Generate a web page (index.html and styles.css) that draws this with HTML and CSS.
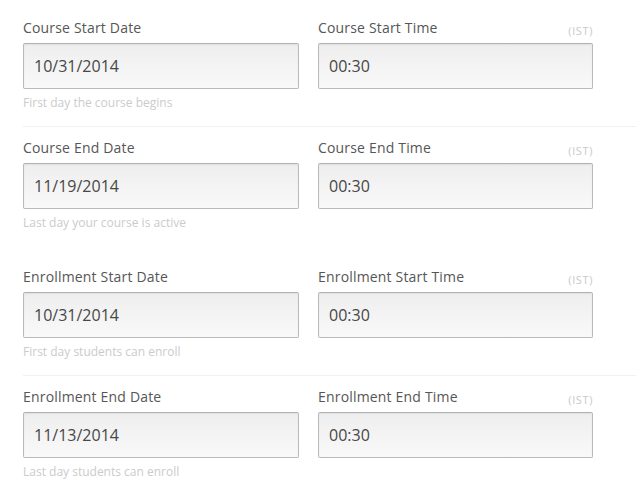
FILE: index.html
```html
<!DOCTYPE html>
<html lang="en">
<head>
<meta charset="utf-8">
<title>Course Schedule</title>
<link rel="stylesheet" href="styles.css">
</head>
<body>
<form class="schedule">
  <section class="group sep">
    <div class="field">
      <div class="label-row"><label class="label">Course Start Date</label></div>
      <input class="input" type="text" value="10/31/2014">
      <p class="hint">First day the course begins</p>
    </div>
    <div class="field">
      <div class="label-row"><label class="label">Course Start Time</label><span class="tz">(IST)</span></div>
      <input class="input" type="text" value="00:30">
    </div>
  </section>
  <section class="group plain">
    <div class="field">
      <div class="label-row"><label class="label">Course End Date</label></div>
      <input class="input" type="text" value="11/19/2014">
      <p class="hint">Last day your course is active</p>
    </div>
    <div class="field">
      <div class="label-row"><label class="label">Course End Time</label><span class="tz">(IST)</span></div>
      <input class="input" type="text" value="00:30">
    </div>
  </section>
  <section class="group sep">
    <div class="field">
      <div class="label-row"><label class="label">Enrollment Start Date</label></div>
      <input class="input" type="text" value="10/31/2014">
      <p class="hint">First day students can enroll</p>
    </div>
    <div class="field">
      <div class="label-row"><label class="label">Enrollment Start Time</label><span class="tz">(IST)</span></div>
      <input class="input" type="text" value="00:30">
    </div>
  </section>
  <section class="group plain">
    <div class="field">
      <div class="label-row"><label class="label">Enrollment End Date</label></div>
      <input class="input" type="text" value="11/13/2014">
      <p class="hint">Last day students can enroll</p>
    </div>
    <div class="field">
      <div class="label-row"><label class="label">Enrollment End Time</label><span class="tz">(IST)</span></div>
      <input class="input" type="text" value="00:30">
    </div>
  </section>
</form>
</body>
</html>
```

FILE: styles.css
```css
html, body {
  margin: 0;
  padding: 0;
  background: #ffffff;
}

body {
  font-family: "Open Sans", "Noto Sans", sans-serif;
  overflow: hidden;
}

.schedule {
  padding: 18px 0 0 23px;
}

.group {
  display: grid;
  grid-template-columns: 276px 275px;
  column-gap: 19px;
  align-items: start;
}

.group.sep {
  padding-bottom: 14px;
  border-bottom: 1px solid #f1f1f1;
  margin-bottom: 11px;
}

.group.plain {
  padding-bottom: 35px;
}

.group.plain:last-child {
  padding-bottom: 0;
}

.field {
  display: flex;
  flex-direction: column;
}

.label-row {
  display: flex;
  justify-content: space-between;
  align-items: flex-end;
  height: 20px;
  margin-bottom: 5px;
}

.label {
  font-size: 14px;
  line-height: 20px;
  letter-spacing: 0.18px;
  color: #565656;
}

.tz {
  font-size: 11px;
  line-height: 16px;
  color: #c9c9c9;
  letter-spacing: 0.6px;
  position: relative;
  top: 1px;
}

.input {
  box-sizing: border-box;
  width: 100%;
  height: 46px;
  margin: 0;
  padding: 0 10px;
  border: 1px solid #bababa;
  border-top-color: #b0b0b0;
  border-radius: 2px;
  background: linear-gradient(#eeeeee, #f9f9f9);
  box-shadow: inset 0 1px 2px rgba(0, 0, 0, 0.06);
  font-family: "Open Sans", "Noto Sans", sans-serif;
  font-size: 16px;
  color: #474747;
  outline: none;
}

.hint {
  margin: 5px 0 0 0;
  font-size: 12px;
  line-height: 18px;
  color: #cbcbcb;
}
```
